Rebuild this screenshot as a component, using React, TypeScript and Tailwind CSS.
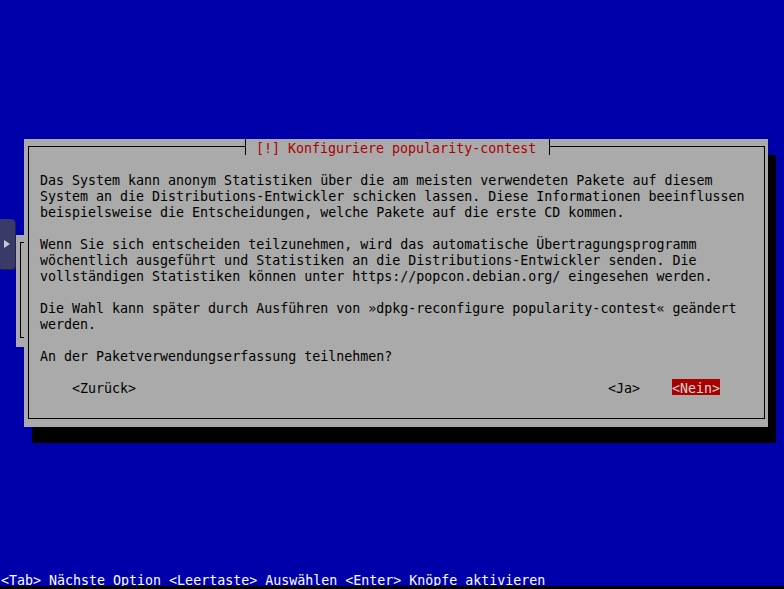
import React from "react";

const lines: string[] = [
  "Das System kann anonym Statistiken über die am meisten verwendeten Pakete auf diesem",
  "System an die Distributions-Entwickler schicken lassen. Diese Informationen beeinflussen",
  "beispielsweise die Entscheidungen, welche Pakete auf die erste CD kommen.",
  "",
  "Wenn Sie sich entscheiden teilzunehmen, wird das automatische Übertragungsprogramm",
  "wöchentlich ausgeführt und Statistiken an die Distributions-Entwickler senden. Die",
  "vollständigen Statistiken können unter https://popcon.debian.org/ eingesehen werden.",
  "",
  "Die Wahl kann später durch Ausführen von »dpkg-reconfigure popularity-contest« geändert",
  "werden.",
  "",
  "An der Paketverwendungserfassung teilnehmen?",
  "",
];

export default function App() {
  return (
    <div className="relative flex h-[589px] w-[784px] flex-col overflow-hidden bg-[#0000aa] font-['DejaVu_Sans_Mono',monospace] text-[13.3px] leading-[20px]">
      {/* side tab */}
      <div className="absolute left-0 top-[219px] flex h-[50px] w-[15px] items-center justify-center rounded-r-[4px] bg-[#3a3a68] shadow-[1px_1px_0_0_#22224a]">
        <svg width="6" height="8" viewBox="0 0 6 8" className="ml-[-2px]">
          <polygon points="0,0 6,4 0,8" fill="#c8c8d8" />
        </svg>
      </div>

      {/* window behind */}
      <div className="absolute left-[16px] top-[235px] h-[112px] w-[100px] bg-[#aaaaaa]">
        <div className="ml-[4px] mt-[7px] h-[96px] w-[90px] border-y border-l border-black" />
      </div>

      <div className="h-[139px] shrink-0" />

      {/* main dialog */}
      <div className="relative ml-[24px] h-[288px] w-[744px] shrink-0 bg-[#aaaaaa] px-[4px] pt-[7px] shadow-[8px_16px_0_0_#000000]">
        <div className="relative h-[273px] w-[737px] border border-black pl-[11px] pt-[24px] text-black">
          <div className="absolute left-[216px] top-[-8px] flex h-[16px] w-[305px] border-x border-black bg-[#aaaaaa] pl-[10px] text-[#aa0000]">
            <span className="h-[16px] whitespace-pre">[!] Konfiguriere popularity-contest</span>
          </div>
          {lines.map((l, i) => (
            <div key={i} className="h-[16px] whitespace-pre">
              {l}
            </div>
          ))}
          <div className="flex h-[16px] whitespace-pre">
            <span className="ml-[32px] h-[16px] w-[64px]">&lt;Zurück&gt;</span>
            <span className="ml-[472px] h-[16px] w-[32px]">&lt;Ja&gt;</span>
            <span className="ml-[32px] h-[16px] w-[48px] bg-[#aa0000] text-[#d8d8d8]">&lt;Nein&gt;</span>
          </div>
        </div>
      </div>

      <div className="flex-1" />

      <div className="h-[16px] shrink-0 whitespace-pre pl-[1px] leading-[22px] text-white">
        &lt;Tab&gt; Nächste Option &lt;Leertaste&gt; Auswählen &lt;Enter&gt; Knöpfe aktivieren
      </div>
      <div className="h-[3px] shrink-0 bg-black" />
    </div>
  );
}
